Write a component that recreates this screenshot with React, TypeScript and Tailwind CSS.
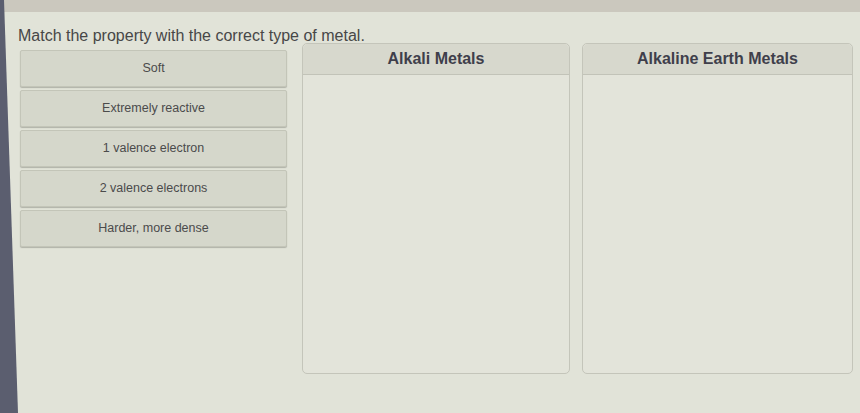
const properties = [
  "Soft",
  "Extremely reactive",
  "1 valence electron",
  "2 valence electrons",
  "Harder, more dense",
];

const groups = ["Alkali Metals", "Alkaline Earth Metals"];

function PropertyCard({ label }: { label: string }) {
  return (
    <div className="h-[37px] flex items-center justify-center rounded-[2px] bg-[#d5d7cb] border border-[#c3c5b8] shadow-[0_1px_1px_rgba(90,90,80,0.35)] text-[12.5px] text-[#4b4b4b]">
      {label}
    </div>
  );
}

function DropZone({ title, width }: { title: string; width: string }) {
  return (
    <div className={`${width} h-[331px] flex flex-col rounded-[5px] border border-[#c4c5ba] bg-[#e3e4da]`}>
      <div className="h-[31px] flex items-center justify-center rounded-t-[5px] bg-[#d7d8cd] border-b border-[#c2c3b8] text-[16px] font-bold text-[#3f3f4b]">
        {title}
      </div>
      <div className="flex-1" />
    </div>
  );
}

export default function App() {
  return (
    <div
      className="relative w-[860px] h-[413px] overflow-hidden bg-[#e1e3d8]"
      style={{ fontFamily: '"Liberation Sans", Arial, sans-serif' }}
    >
      {/* screen bezel edges */}
      <div className="h-[12px] bg-[#cbc8be]" />
      <div className="absolute left-0 top-0 w-[18px] h-full bg-[#5b5e6f] [clip-path:polygon(0_0,4px_0,18px_100%,0_100%)]" />

      <div className="pl-[18px] pr-[7px]">
        <h1 className="mt-[14px] text-[16px] leading-[19px] text-[#474747]">
          Match the property with the correct type of metal.
        </h1>

        <div className="flex items-start gap-[15px]">
          <div className="w-[268px] ml-[2px] mt-[5px] flex flex-col gap-[3px]">
            {properties.map((p) => (
              <PropertyCard key={p} label={p} />
            ))}
          </div>

          <div className="flex gap-[12px] -mt-[2px]">
            <DropZone title={groups[0]} width="w-[268px]" />
            <DropZone title={groups[1]} width="w-[271px]" />
          </div>
        </div>
      </div>
    </div>
  );
}
